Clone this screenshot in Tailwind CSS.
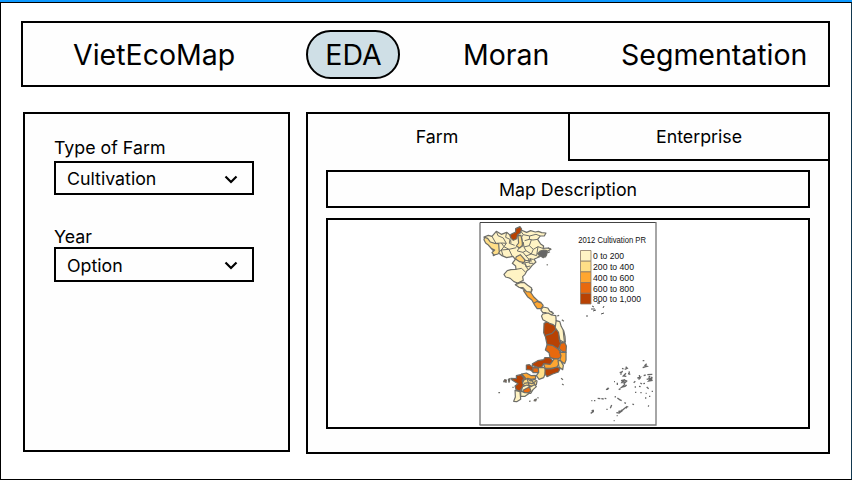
<!DOCTYPE html>
<html lang="en">
<head>
<meta charset="utf-8">
<title>VietEcoMap</title>
<script src="https://cdn.jsdelivr.net/npm/@tailwindcss/browser@4"></script>
</head>
<body class="bg-white font-['Inter',sans-serif] text-black">
<div class="w-[852px] h-[480px] overflow-hidden flex flex-col border-t-2 border-t-[#0d99ff]">
<div class="flex-1 flex flex-col border border-black border-r-[#12384f] pl-5 pt-[18px]">
  <nav class="w-[809px] h-[66px] border-2 border-black bg-[#fefefe] flex items-center text-[28.5px] leading-none whitespace-nowrap">
    <a class="ml-[50px] w-[233px] pt-[2px]">VietEcoMap</a>
    <a class="w-[94px] h-[49px] rounded-full border-2 border-black bg-[#cfdfe6] flex items-center justify-center pt-[2px] pl-[1px]">EDA</a>
    <a class="ml-[63px] w-[158px] pt-[2px]">Moran</a>
    <a class="pt-[2px]">Segmentation</a>
  </nav>
  <main class="flex mt-[25px] pl-[2px]">
    <aside class="w-[267px] h-[340px] border-2 border-black bg-[#fefefe] px-[29px] pt-[23px] text-[17.8px] leading-[22px]">
      <div>Type of Farm</div>
      <div class="mt-[2px] w-[200px] h-[34px] border-2 border-black flex items-center justify-between pl-[11px] pr-[14px] pt-[2px]">
        <span>Cultivation</span>
        <svg class="w-[14px] h-[9px]" viewBox="0 0 14 9" fill="none" stroke="black" stroke-width="2.2"><path d="M1.5 1.5 7 7 12.5 1.5"/></svg>
      </div>
      <div class="mt-[31px]">Year</div>
      <div class="-mt-px w-[200px] h-[35px] border-2 border-black flex items-center justify-between pl-[11px] pr-[14px] pt-[2px]">
        <span>Option</span>
        <svg class="w-[14px] h-[9px]" viewBox="0 0 14 9" fill="none" stroke="black" stroke-width="2.2"><path d="M1.5 1.5 7 7 12.5 1.5"/></svg>
      </div>
    </aside>
    <section class="ml-4 w-[524px] h-[342px] border-2 border-black bg-[#fefefe] text-[17.8px] leading-[22px]">
      <div class="flex h-[47px] text-center">
        <div class="w-[260px] pt-[12px] pr-[2px]">Farm</div>
        <div class="flex-1 h-[47px] border-l-2 border-b-2 border-black pt-[12px]">Enterprise</div>
      </div>
      <div class="ml-[18px] mt-[9px] w-[484px] h-[38px] border-2 border-black flex items-center justify-center pt-px">Map Description</div>
      <div class="ml-[18px] mt-[10px] w-[484px] h-[211px] border-2 border-black bg-white flex pl-[151px] pt-[2px]">
        <svg class="w-[178px] h-[204px] shrink-0" viewBox="479 222 178 204" font-family="'Liberation Sans', Arial, sans-serif">
          <path d="M480 425V222.500H656" fill="none" stroke="#444"/>
          <path d="M656 222V425H479.500" fill="none" stroke="#777" stroke-width="1.300"/>
          <!-- southern provinces -->
          <g transform="translate(495.700 330) scale(.33333)" stroke="#6d6d68" stroke-width="3.600" stroke-linejoin="round">
            <path fill="#fff3c4" d="M191 -8 204 2 208 20 209 36 196 38 190 22Z"/>
            <path fill="#b84203" d="M145 -20 161 -27 180 -22 192 -5 190 26 195 42 187 57 165 47 154 43 149 20 144 8Z"/>
            <path fill="none" d="M150 16 169 10 180 -2 190 -5"/>
            <path fill="#e8690e" d="M154 44 170 46 187 57 196 67 199 80 184 88 163 83 160 68 149 60Z"/>
            <path fill="#e8690e" d="M195 40 207 37 212 48 211 67 197 63 190 55Z"/>
            <path fill="#ffa630" d="M192 67 211 67 211 90 207 101 192 91 196 77Z"/>
            <path fill="#ffa630" d="M143 101 166 99 176 86 187 87 190 101 184 111 166 115 148 114Z"/>
            <path fill="#ffde87" d="M187 93 194 91 203 106 201 119 190 111Z"/>
            <path fill="#b84203" d="M110 101 126 92 144 89 147 83 163 83 171 93 163 103 144 101 138 111 125 112 110 106Z"/>
            <path fill="#b84203" d="M92 105 101 104 111 111 125 112 130 119 128 126 112 126 104 120 92 119Z"/>
            <path fill="#e8690e" d="M111 114 125 113 131 122 126 128 112 128Z"/>
            <path fill="#ffde87" d="M128 113 144 112 151 119 148 132 144 143 130 148 122 137 129 127Z"/>
            <path fill="#b84203" d="M148 116 167 117 185 111 193 116 188 126 171 132 154 140 148 132Z"/>
            <path fill="#ffa630" d="M78 132 92 129 107 137 119 136 120 146 106 148 97 145 90 152 84 143Z"/>
            <path fill="#e8690e" d="M78 132 89 144 90 155 83 160 75 150Z"/>
            <path fill="#b84203" d="M62 137 75 134 85 144 79 153 84 162 80 173 72 184 61 179 58 168 67 161 50 151 46 145 62 146Z"/>
            <path fill="#ffde87" d="M84 151 96 145 104 153 116 148 124 153 122 164 114 171 101 166 89 169 80 160Z"/>
            <path fill="none" d="M94 146 98 158 109 161 120 154M85 160 98 158 100 169M104 147 119 165"/>
            <path fill="#fff3c4" d="M81 170 94 165 104 171 116 164 122 170 112 179 105 190 87 188 76 184Z"/>
            <path fill="#e8690e" d="M82 181 93 175 101 171 106 183 96 190 84 188Z"/>
            <path fill="#fff3c4" d="M75 183 87 188 102 189 88 199 75 199Z"/>
            <path fill="#fff3c4" d="M58 181 73 185 75 208 63 215 54 214 59 201Z"/>
            <path fill="#8d3c18" d="M27 149 32 150 31 157 25 154ZM38 148 43 146 40 157ZM23 152 26 157M52 170 52 174M8 188 13 188M115 210 122 207 120 213 114 212M100 214 105 213M196 145 202 149M199 162 204 165M125 203 129 204"/>
          </g>
          <!-- central coast -->
          <g transform="translate(510.500 280) scale(.33333)" stroke="#6d6d68" stroke-width="3.600" stroke-linejoin="round">
            <path fill="#fff3c4" d="M17 8 29 9 38 11 49 22 65 29 63 35 48 32 41 28 29 23Z"/>
            <path fill="#ffa630" d="M39 32 51 26 62 39 70 51 85 65 91 67 98 76 92 86 80 86 73 76 64 60 51 50Z"/>
            <path fill="none" d="M71 69 80 64 91 69"/>
            <path fill="#fff3c4" d="M91 90 98 81 112 84 118 94 129 100 121 106 106 98 97 98Z"/>
            <path fill="#fff3c4" d="M97 102 113 99 123 105 136 107 137 122 144 130 138 141 128 134 117 130 97 119 93 108Z"/>
            <path fill="#fff3c4" d="M137 122 148 125 152 139 158 150 162 188 148 180 144 157 134 143Z"/>
            <path fill="none" d="M140 108 146 106M154 119 160 124M120 94 126 96"/>
          </g>
          <!-- northern provinces -->
          <g transform="translate(476.300 218) scale(.33333)" stroke="#6d6d68" stroke-width="3.600" stroke-linejoin="round">
            <path fill="#fff3c4" d="M23 57 36 52 47 55 60 40 75 49 91 43 105 54 124 45 134 36 151 43 163 38 177 42 186 40 196 44 209 45 204 54 192 54 184 64 193 78 202 84 200 91 215 90 224 94 211 101 208 117 190 113 183 119 173 124 179 132 167 143 160 152 152 158 146 169 139 176 141 187 124 195 113 191 102 181 88 177 83 169 93 158 104 155 119 154 118 144 108 136 117 124 110 115 91 119 77 113 66 104 51 113 53 100 45 91 38 83 32 74Z"/>
            <path fill="none" stroke-width="3" d="M47 55 59 76 75 75 83 86 75 96 80 112M60 40 65 53 81 60 90 76 83 86 98 94 120 89M91 43 88 58 101 64 99 76 115 82M75 75 90 76M66 104 75 96 98 94 108 115M103 65 104 76M133 39 141 50 136 57 140 84 128 90M141 50 160 54 159 64 145 68M160 54 179 49 192 54M159 64 170 66 184 64M165 66 159 83 143 87 141 72M159 83 171 94 185 86 199 91M171 94 165 108 181 113 185 86M143 87 149 98 165 108 149 114 140 103 149 98M128 90 123 99 140 103M149 114 157 123 171 124M142 124 147 134 160 132 164 120M119 154 136 151 148 163M146 135 149 147 162 144M157 123 159 136 171 136M136 136 148 139 154 154M145 127 167 129"/>
            <path fill="#ffde87" d="M125 53 134 52 138 73 138 82 130 90 120 84 127 75Z"/>
            <path fill="#ffde87" d="M25 58 34 61 42 72 55 76 67 77 69 102 65 108 53 111 47 104 55 96 46 92 35 80 28 75 23 65Z"/>
            <path fill="#ffd47b" d="M120 116 132 110 140 119 146 126 143 134 130 131 118 123Z"/>
            <path fill="#b84203" d="M104 49 118 42 118 32 131 26 136 33 132 45 124 50 121 62 111 67 104 61 101 53Z"/>
            <path fill="#666" d="M184 107 192 99 202 96 212 98 211 111 201 119 189 112ZM215 89 224 94M213 105 221 101M184 118 191 116M211 140 215 141"/>
            <path fill="#fff3c4" d="M117 200 132 194 143 193 154 202 166 210 165 222 151 221 140 209 128 208Z"/>
            <path fill="#fff3c4" stroke="none" d="M88 174 95 160 118 157 137 156 144 164 136 175 137 185 124 192 114 188 103 178Z"/>
          </g>
          <!-- offshore islands -->
          <g transform="translate(590 350) scale(.33333)" fill="none" stroke="#686868" stroke-width="4">
            <path d="M158 32h5M170 41l-5 5 6 3-9 2M158 53l6-2M96 55l5 2M107 50l5 5-8 3M89 68l8-2M98 63l-4 5M108 70l-8 8 9 1M118 64l-1 9M114 71l7 2M91 73l4-2M93 92l8-2-5 7 12-2-7 7M95 99l8-9 8 3M105 103l-9 8 9-2 5-4M86 119l6-3M94 113l8-7M72 95h3M82 98v7M48 119l9-5M53 113v7M131 98l5-4M142 84l9-2-5 7M148 75l2 12M161 77l6-2M172 74l15-1M176 79l5 1M186 80l-2 5M170 88l13-3-7 8 12-2M175 83l10 4-8 6M151 99l5 3M147 109l5 1M160 101l5-1M134 111h4M170 111l6 5M135 127h4M151 128h4M167 130h3M185 124h4M177 139h4M165 144h4M174 167l3 2M4 152h3M12 152h4M23 145l8 1M34 146l7 1M44 145l5 1M74 141l4-1M82 144l6 4M87 148l8 4M103 158l5 2M127 162l5 2M61 175l4-10M49 178h4M79 188l8 1 10-7M85 184l9-1 11-9M88 189l9-10M105 174l7-5-4 6M113 169v3M80 197h3M71 212h3M2 190l8-5 0-6M6 180l2 6"/>
          </g>
          <g stroke="#8c7964" stroke-width=".8">
            <path fill="#fff3c4" d="M580.500 250.500h10.500v10.700h-10.500z"/>
            <path fill="#ffde87" d="M580.500 261.200h10.500v10.700h-10.500z"/>
            <path fill="#ffa630" d="M580.500 271.900h10.500v10.700h-10.500z"/>
            <path fill="#e8690e" d="M580.500 282.600h10.500v10.700h-10.500z"/>
            <path fill="#b84203" d="M580.500 293.300h10.500v10.700h-10.500z"/>
          </g>
          <path fill="none" stroke="#555" d="M599 301v3M597 303h3M604 306l-1 2M591 309h4M593 311l3-1M592 306l2 1M601 314l3-1M586 316h2"/>
          <text x="578.200" y="243.200" font-size="8.300" textLength="67.800" lengthAdjust="spacingAndGlyphs" fill="#111">2012 Cultivation PR</text>
          <g font-size="9" fill="#111">
            <text x="593" y="259.400" textLength="31" lengthAdjust="spacingAndGlyphs">0 to 200</text>
            <text x="593" y="270.300" textLength="41" lengthAdjust="spacingAndGlyphs">200 to 400</text>
            <text x="593" y="281.300" textLength="41" lengthAdjust="spacingAndGlyphs">400 to 600</text>
            <text x="593" y="291.900" textLength="41" lengthAdjust="spacingAndGlyphs">600 to 800</text>
            <text x="593" y="302.300" textLength="48" lengthAdjust="spacingAndGlyphs">800 to 1,000</text>
          </g>
        </svg>
      </div>
    </section>
  </main>
</div>
</div>
</body>
</html>
